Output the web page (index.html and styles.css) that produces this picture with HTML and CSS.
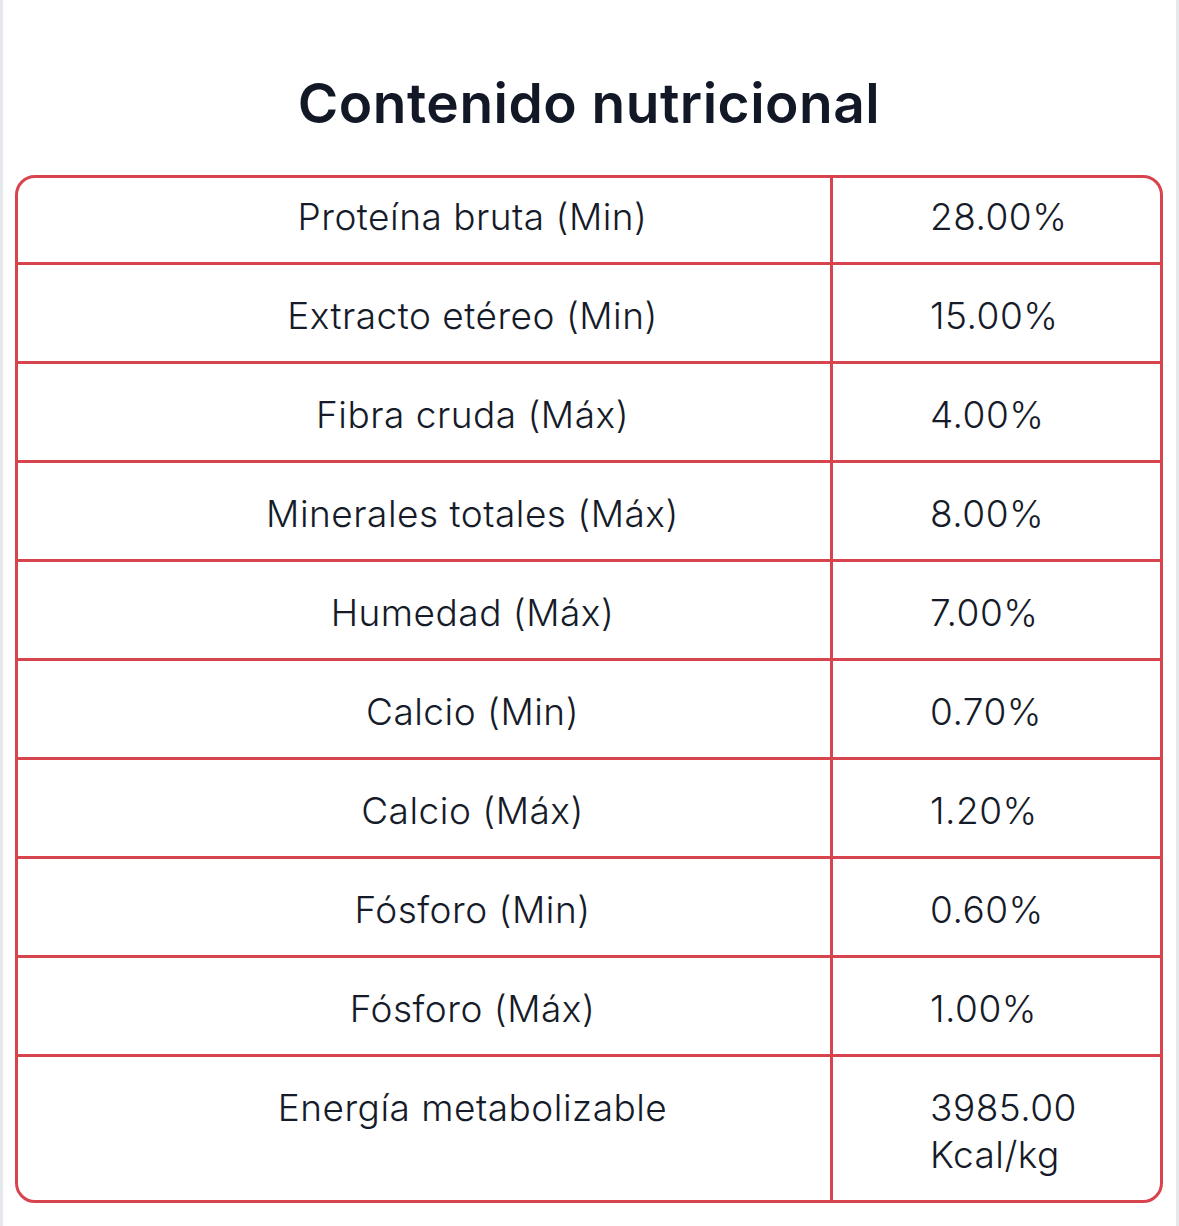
FILE: index.html
```html
<!DOCTYPE html>
<html lang="es">
<head>
<meta charset="utf-8">
<title>Contenido nutricional</title>
<link rel="stylesheet" href="styles.css">
</head>
<body>
<div class="frame">
  <h1 class="title">Contenido nutricional</h1>
  <div class="nut-table">
    <div class="row first"><div class="label">Proteína bruta (Min)</div><div class="value">28.00%</div></div>
    <div class="row"><div class="label">Extracto etéreo (Min)</div><div class="value">15.00%</div></div>
    <div class="row"><div class="label">Fibra cruda (Máx)</div><div class="value">4.00%</div></div>
    <div class="row"><div class="label">Minerales totales (Máx)</div><div class="value">8.00%</div></div>
    <div class="row"><div class="label">Humedad (Máx)</div><div class="value">7.00%</div></div>
    <div class="row"><div class="label">Calcio (Min)</div><div class="value">0.70%</div></div>
    <div class="row"><div class="label">Calcio (Máx)</div><div class="value">1.20%</div></div>
    <div class="row"><div class="label">Fósforo (Min)</div><div class="value">0.60%</div></div>
    <div class="row"><div class="label">Fósforo (Máx)</div><div class="value">1.00%</div></div>
    <div class="row"><div class="label">Energía metabolizable</div><div class="value">3985.00 Kcal/kg</div></div>
  </div>
</div>
</body>
</html>
```
FILE: styles.css
```css
html, body {
  margin: 0;
  padding: 0;
  background: #ffffff;
}

.frame {
  box-sizing: border-box;
  width: 1179px;
  min-height: 1226px;
  border-left: 3px solid #e5e8ec;
  border-right: 3px solid #e5e8ec;
  padding: 1px 13px 0 12px;
  font-family: Inter, "Liberation Sans", sans-serif;
  color: #161b29;
}

.title {
  margin: 69px 0 39px;
  font-size: 55px;
  line-height: 66px;
  font-weight: 600;
  letter-spacing: 0.5px;
  text-align: center;
  color: #121826;
}

.nut-table {
  border: 3px solid #d8444d;
  border-radius: 20px;
  overflow: hidden;
}

.row {
  display: grid;
  grid-template-columns: 815px 1fr;
  border-top: 3px solid #d8444d;
  font-size: 37px;
  line-height: 47px;
  font-weight: 300;
  letter-spacing: 0.5px;
}

.row.first {
  border-top: none;
}

.label,
.value {
  padding: 27px 0 22px 97px;
}

.row.first .label,
.row.first .value {
  padding-top: 15px;
}

.label {
  border-right: 3px solid #d8444d;
  text-align: center;
}

.value {
  text-align: left;
  padding-right: 10px;
}
```
